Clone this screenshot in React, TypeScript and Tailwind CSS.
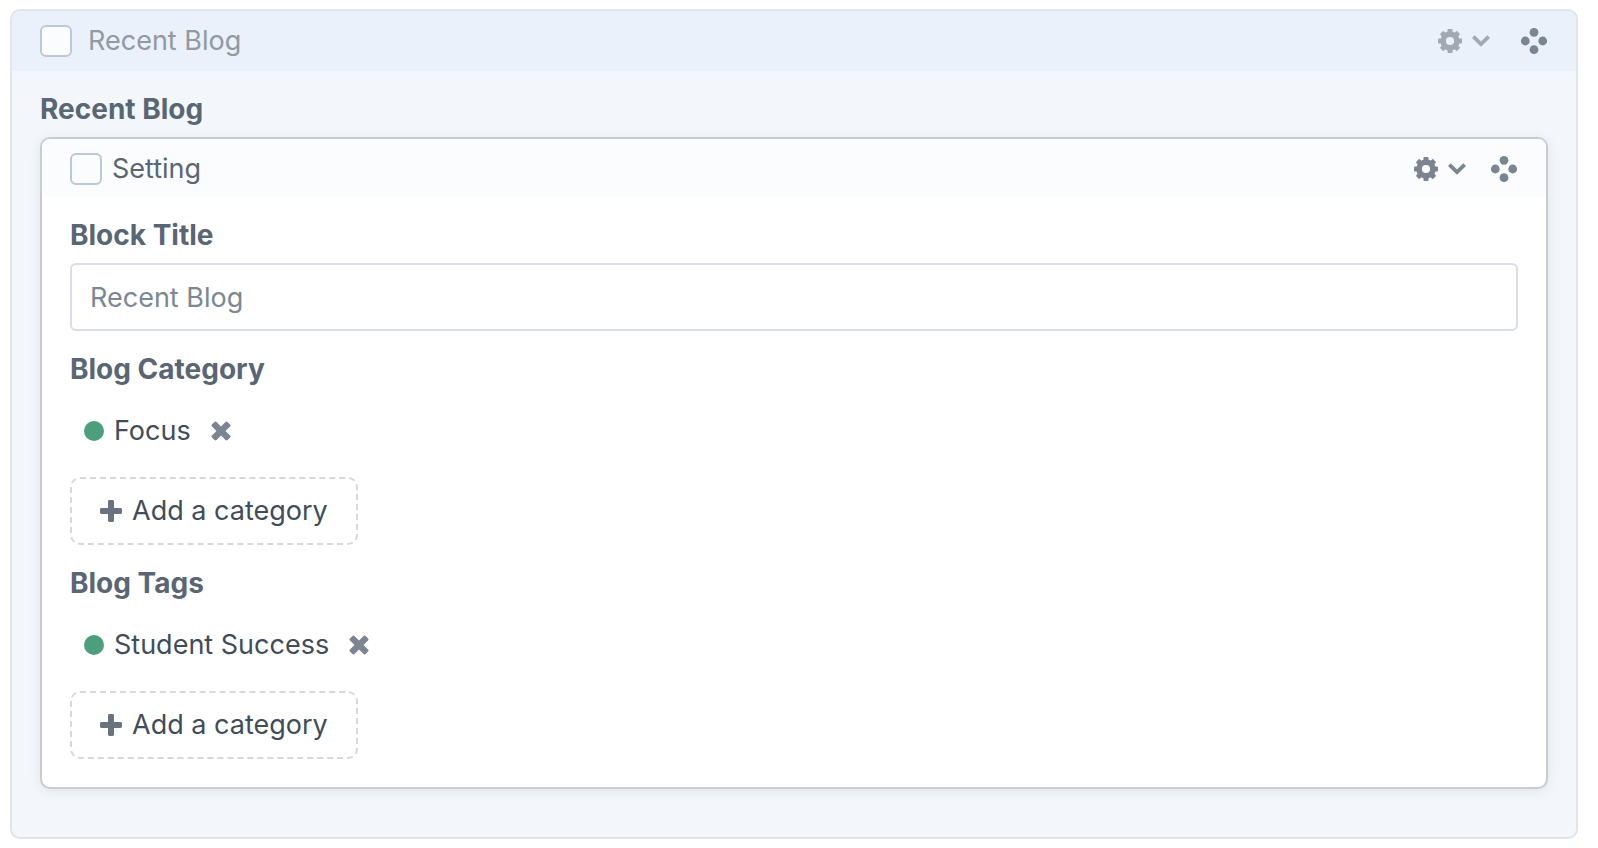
import { useState } from "react";

type IconProps = { className?: string };

const TOOTH_ANGLES = [0, 45, 90, 135, 180, 225, 270, 315];

const GearIcon = ({ className }: IconProps) => (
    <svg viewBox="0 0 24 24" fill="currentColor" className={className} aria-hidden="true">
        <circle cx="12" cy="12" r="6.9" fill="none" stroke="currentColor" strokeWidth="5.6" />
        {TOOTH_ANGLES.map((angle) => (
            <rect key={angle} x="9.5" y="0" width="5" height="5" rx="0.8" transform={`rotate(${angle} 12 12)`} />
        ))}
    </svg>
);

const ChevronIcon = ({ className }: IconProps) => (
    <svg viewBox="0 0 18 12" fill="none" stroke="currentColor" strokeWidth="3.9" className={className} aria-hidden="true">
        <path d="M1.3 1.6 9 9.1 16.7 1.6" />
    </svg>
);

const MoveIcon = ({ className }: IconProps) => (
    <svg viewBox="0 0 28 28" fill="currentColor" className={className} aria-hidden="true">
        <circle cx="14" cy="5.3" r="4.4" />
        <circle cx="5.3" cy="14" r="4.4" />
        <circle cx="22.7" cy="14" r="4.4" />
        <circle cx="14" cy="22.7" r="4.4" />
    </svg>
);

const RemoveIcon = ({ className }: IconProps) => (
    <svg viewBox="0 0 20 20" fill="currentColor" className={className} aria-hidden="true">
        <rect x="-1" y="6.8" width="22" height="6.4" rx="1.4" transform="rotate(45 10 10)" />
        <rect x="-1" y="6.8" width="22" height="6.4" rx="1.4" transform="rotate(-45 10 10)" />
    </svg>
);

const PlusIcon = ({ className }: IconProps) => (
    <svg viewBox="0 0 22 22" fill="currentColor" className={className} aria-hidden="true">
        <rect x="8" y="0" width="6" height="22" rx="1.4" />
        <rect x="0" y="8" width="22" height="6" rx="1.4" />
    </svg>
);

const Checkbox = ({ id }: { id: string }) => (
    <input
        id={id}
        type="checkbox"
        className="size-8 shrink-0 appearance-none rounded-md border-2 border-[#bcc8d8] bg-[#fbfcfe] checked:bg-[#bcc8d8]"
    />
);

const SettingsButton = ({ label }: { label: string }) => (
    <button type="button" aria-label={label} className="flex items-center gap-2.5">
        <GearIcon className="size-6" />
        <ChevronIcon className="h-3 w-[18px]" />
    </button>
);

const MoveButton = ({ label }: { label: string }) => (
    <button type="button" aria-label={label} className="cursor-move text-[#798590]">
        <MoveIcon className="size-7" />
    </button>
);

function ElementField({ label, initial }: { label: string; initial: string[] }) {
    const [items, setItems] = useState(initial);

    return (
        <section className="pt-[22px]">
            <h3 className="text-[28px] leading-8 font-bold text-[#596673]">{label}</h3>
            <ul>
                {items.map((item) => (
                    <li key={item} className="flex h-[92px] items-center px-3.5 text-[#3f4d5a]">
                        <span className="mr-2.5 size-5 rounded-full bg-[#4c9f7c]" />
                        {item}
                        <button
                            type="button"
                            aria-label={`Remove ${item}`}
                            onClick={() => setItems(items.filter((i) => i !== item))}
                            className="ml-5 text-[#7b8490]"
                        >
                            <RemoveIcon className="size-5" />
                        </button>
                    </li>
                ))}
            </ul>
            <button
                type="button"
                className="flex h-[68px] items-center gap-2.5 rounded-[10px] border-2 border-dashed border-[#d5d8dd] px-7 text-[#3f4d5a]"
            >
                <PlusIcon className="size-[22px] text-[#69737f]" />
                Add a category
            </button>
        </section>
    );
}

export default function App() {
    const [title, setTitle] = useState("Recent Blog");

    return (
        <main className="bg-white pt-[9px] pr-5 pb-[9px] pl-2.5 font-[Inter,'Liberation_Sans',sans-serif] text-[27px] leading-8">
            <div className="overflow-hidden rounded-[10px] border-2 border-[#e2e4e8] bg-[#f3f7fc]">
                {/* Block header */}
                <header className="flex h-[60px] items-center bg-[#eaf1fa] px-7">
                    <Checkbox id="block" />
                    <label htmlFor="block" className="ml-4 text-[#9199a3]">
                        Recent Blog
                    </label>
                    <div className="ml-auto flex items-center gap-[30px] text-[#a2a9b3]">
                        <SettingsButton label="Block settings" />
                        <MoveButton label="Move block" />
                    </div>
                </header>

                <div className="px-7 pt-[22px] pb-12">
                    <h2 className="text-[28px] leading-8 font-bold text-[#596673]">Recent Blog</h2>

                    <div className="mt-3 overflow-hidden rounded-[10px] border-2 border-[#c9cbce] bg-white shadow-[0_2px_12px_rgba(31,41,51,0.09)]">
                        <header className="flex h-[58px] items-center bg-[#fbfcfe] px-7 pt-0.5">
                            <Checkbox id="setting" />
                            <label htmlFor="setting" className="ml-2.5 text-[#596673]">
                                Setting
                            </label>
                            <div className="ml-auto flex items-center gap-6 text-[#7b8490]">
                                <SettingsButton label="Setting options" />
                                <MoveButton label="Move setting" />
                            </div>
                        </header>

                        <div className="px-7 pt-[22px] pb-7">
                            <label htmlFor="block-title" className="block text-[28px] leading-8 font-bold text-[#596673]">
                                Block Title
                            </label>
                            <input
                                id="block-title"
                                type="text"
                                value={title}
                                onChange={(e) => setTitle(e.target.value)}
                                className="mt-3 block h-[68px] w-full rounded-md border-2 border-[#d8dde7] bg-white px-[18px] text-[#7b8793]"
                            />
                            <ElementField label="Blog Category" initial={["Focus"]} />
                            <ElementField label="Blog Tags" initial={["Student Success"]} />
                        </div>
                    </div>
                </div>
            </div>
        </main>
    );
}
